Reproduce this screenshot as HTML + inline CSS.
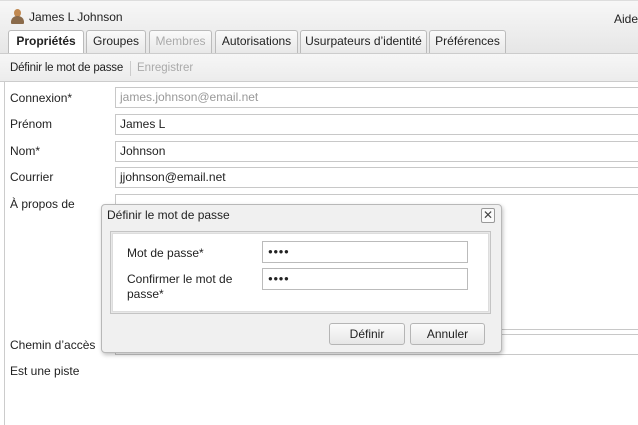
<!DOCTYPE html>
<html><head><meta charset="utf-8"><style>
*{margin:0;padding:0;box-sizing:border-box}
body{width:638px;height:425px;overflow:hidden;background:#fff;font-family:"Liberation Sans",sans-serif;font-size:12px;color:#222;position:relative}
.a{position:absolute;white-space:nowrap}
.top{left:0;top:0;width:638px;height:53px;background:linear-gradient(#f7f7f7,#e6e6e6);border-top:1px solid #ddd}
.tab{position:absolute;top:30px;height:23px;border:1px solid #bbb;border-bottom:none;border-radius:3px 3px 0 0;background:linear-gradient(#fafafa,#e8e8e8);text-align:center;line-height:21px;font-size:12px}
.tb{left:0;top:53px;width:638px;height:29px;background:linear-gradient(#f6f6f6,#ececec);border-top:1px solid #ccc;border-bottom:1px solid #ccc}
.in{position:absolute;left:115px;width:530px;height:21px;border:1px solid #c8c8c8;background:#fff;padding-left:4px;line-height:19px;font-size:12px}
.lab{position:absolute;left:10px;font-size:12px}
.btn{position:absolute;top:323px;height:22px;border:1px solid #b5b5b5;border-radius:3px;background:linear-gradient(#fbfbfb,#e6e6e6);text-align:center;line-height:20px}
.pw{position:absolute;left:262px;width:206px;height:22px;border:1px solid #bbb;background:#fff;padding-left:5px;line-height:20px;font-size:8px;letter-spacing:0.5px}
</style></head><body>
<div class="a top"></div>
<div class="a" style="left:11px;top:9px;width:13px;height:15px">
<div style="position:absolute;left:3px;top:0;width:7px;height:8px;border-radius:50%;background:#c08850"></div>
<div style="position:absolute;left:0;top:7px;width:13px;height:8px;border-radius:6px 6px 1px 1px;background:#8a6a4a"></div></div>
<div class="a" style="left:29px;top:10px">James L Johnson</div>
<div class="a" style="left:614px;top:12px">Aide</div>
<div class="tab" style="left:8px;width:76px;background:#fff;font-weight:bold;height:24px">Propriétés</div>
<div class="tab" style="left:86px;width:60px">Groupes</div>
<div class="tab" style="left:149px;width:63px;color:#aaa">Membres</div>
<div class="tab" style="left:215px;width:83px">Autorisations</div>
<div class="tab" style="left:300px;width:127px">Usurpateurs d’identité</div>
<div class="tab" style="left:429px;width:77px">Préférences</div>
<div class="a tb"></div>
<div class="a" style="left:10px;top:62px;font-size:11.5px;letter-spacing:-0.2px">Définir le mot de passe</div>
<div class="a" style="left:130px;top:61px;width:1px;height:15px;background:#ccc"></div>
<div class="a" style="left:137px;top:62px;color:#aaa;font-size:11.5px">Enregistrer</div>
<div class="a" style="left:4px;top:82px;width:1px;height:343px;background:#ccc"></div>
<div class="lab" style="top:91px">Connexion*</div><div class="in" style="top:87px;color:#999">james.johnson@email.net</div>
<div class="lab" style="top:117px">Prénom</div><div class="in" style="top:114px">James L</div>
<div class="lab" style="top:144px">Nom*</div><div class="in" style="top:141px">Johnson</div>
<div class="lab" style="top:170px">Courrier</div><div class="in" style="top:167px">jjohnson@email.net</div>
<div class="lab" style="top:197px">À propos de</div><div class="in" style="top:194px;height:136px"></div>
<div class="lab" style="top:338px">Chemin d’accès</div><div class="in" style="top:334px"></div>
<div class="lab" style="top:364px">Est une piste</div>
<div class="a" style="left:101px;top:204px;width:401px;height:149px;border:1px solid #b8b8b8;border-radius:4px;background:#f0f0f0;box-shadow:1px 2px 4px rgba(0,0,0,.25)"></div>
<div class="a" style="left:107px;top:208px">Définir le mot de passe</div>
<div class="a" style="left:481px;top:208px;width:14px;height:15px;border:1px solid #999;border-radius:2px;background:#fafafa;text-align:center;line-height:12px;font-size:12px;color:#444">✕</div>
<div class="a" style="left:110px;top:231px;width:381px;height:83px;border:1px solid #c4c4c4;background:#e8e8e8"></div>
<div class="a" style="left:112px;top:233px;width:377px;height:79px;background:#fff;border:1px solid #ddd"></div>
<div class="a" style="left:127px;top:246px">Mot de passe*</div>
<div class="a" style="left:127px;top:272px;line-height:15px">Confirmer le mot de<br>passe*</div>
<div class="pw" style="top:241px">●●●●</div>
<div class="pw" style="top:268px">●●●●</div>
<div class="btn" style="left:329px;width:76px">Définir</div>
<div class="btn" style="left:410px;width:75px">Annuler</div>
</body></html>
